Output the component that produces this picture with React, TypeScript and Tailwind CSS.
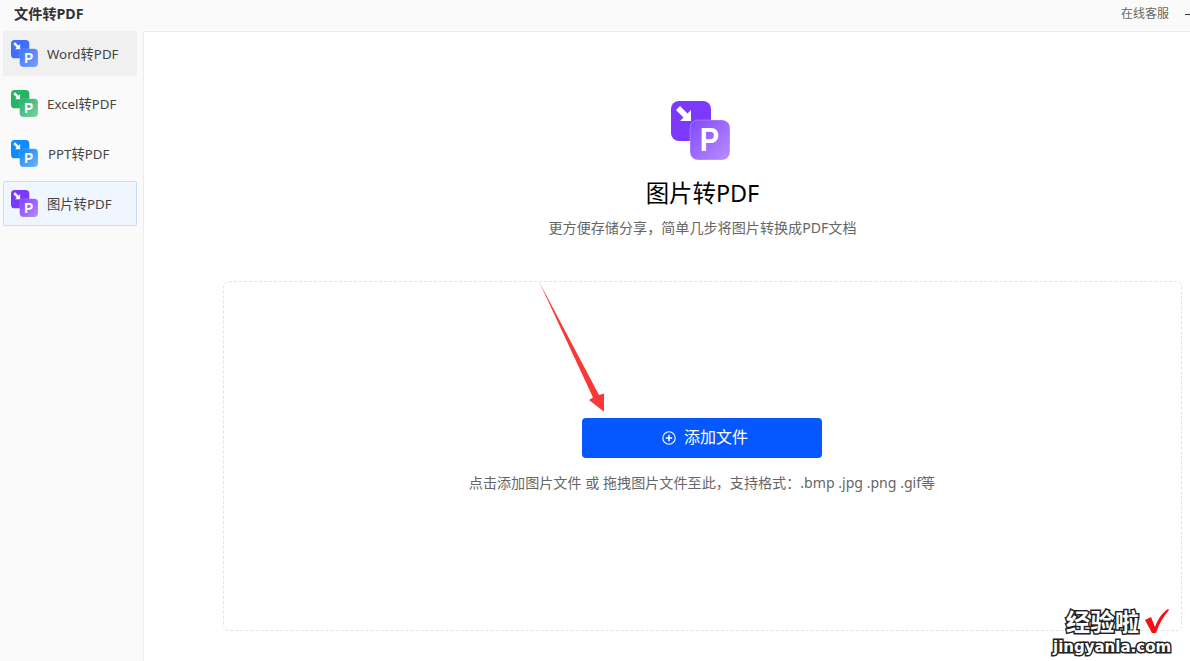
import React from "react";

const FONT = "font-['Noto_Sans','Noto_Sans_CJK_SC',sans-serif]";

function ConvertIcon({ id, back, from, to, size, ...rest }: { id: string; back: string; from: string; to: string; size: number; className?: string }) {
  return (
    <svg width={size} height={size} viewBox="0 0 59 59" {...rest}>
      <defs>
        <linearGradient id={id} x1="0" y1="0" x2="1" y2="1">
          <stop offset="0" stopColor={from} />
          <stop offset="1" stopColor={to} />
        </linearGradient>
      </defs>
      <rect x="0" y="0" width="40" height="40" rx="8" fill={back} />
      <path d="M5 9 L9 5 L16.5 12.5 L20 9 L20 20 L9 20 L12.5 16.5 Z" fill="#fff" />
      <rect x="19" y="19" width="40" height="40" rx="8" fill={`url(#${id})`} stroke="#ffffff" strokeOpacity="0.35" strokeWidth="0.8" />
      <text transform="translate(38.5 50) scale(0.85 1)" textAnchor="middle" fontSize="34" fontWeight="700" fill="#fff" fontFamily="'Liberation Sans',sans-serif">P</text>
    </svg>
  );
}

const items = [
  { id: "w", label: "Word转PDF", back: "#3e6ffb", from: "#3f75fb", to: "#7a9eff", cls: "bg-[#f0f0f0] border-transparent", text: "ml-[9px]" },
  { id: "e", label: "Excel转PDF", back: "#25b366", from: "#25ae68", to: "#7fd3a4", cls: "border-transparent", text: "ml-[9px]" },
  { id: "p", label: "PPT转PDF", back: "#0d8bfa", from: "#1185f5", to: "#6cb4ff", cls: "border-transparent", text: "ml-[10px]" },
  { id: "i", label: "图片转PDF", back: "#7c38fd", from: "#7e41fb", to: "#b48bfd", cls: "bg-[#f0f6ff] border-[#c3dcff]", text: "ml-[9px]" },
];

export default function App() {
  return (
    <div className={`${FONT} relative h-[661px] w-[1190px] overflow-hidden bg-white text-[#333]`}>
      <header className="flex h-[31px] items-center justify-between bg-[#fafafa] pb-[3px] pl-[14px]">
        <div className="text-[14.2px] font-bold text-[#333]">文件转PDF</div>
        <div className="flex items-center">
          <span className="text-[12px] text-[#666]">在线客服</span>
          <span className="ml-[16px] h-px w-[5px] bg-[#333]" />
        </div>
      </header>
      <div className="flex h-[630px]">
        <aside className="flex w-[144px] shrink-0 flex-col gap-[5px] border-r border-[#ececec] bg-[#fafafa] pl-[3px] pr-[6px]">
          {items.map((it) => (
            <div key={it.id} className={`flex h-[45px] items-center rounded-[2px] border pl-[7px] ${it.cls}`}>
              <ConvertIcon id={it.id} back={it.back} from={it.from} to={it.to} size={27} />
              <span className={`${it.text} pt-[2px] text-[13.3px] text-[#444]`}>{it.label}</span>
            </div>
          ))}
        </aside>
        <main className="flex min-w-0 flex-1 flex-col items-center border-t border-[#ececec] pl-[79px] pr-[8px] pt-[69px]">
          <ConvertIcon id="big" back="#7c38fd" from="#8247fb" to="#b98ffe" size={59} className="mr-[4px]" />
          <h1 className="mt-[13px] text-[23.4px] leading-[40px] text-black">图片转PDF</h1>
          <p className="mt-[5px] text-[14.1px] leading-[20px] text-[#666]">更方便存储分享，简单几步将图片转换成PDF文档</p>
          <section className="mt-[43px] flex h-[350px] w-full flex-col items-center rounded-[6px] border border-dashed border-[#e4e4e4] pt-[136px]">
            <button className="mr-[1px] flex h-[40px] w-[240px] items-center justify-center rounded-[4px] bg-[#0558ff] pb-[2px] pl-[6px] text-[16px] text-white">
              <svg width="14" height="14" viewBox="0 0 14 14" className="mr-[8px] mt-[2px]" fill="none" stroke="#fff">
                <circle cx="7" cy="7" r="6.2" strokeWidth="1.1" />
                <path d="M7 3.8V10.2M3.8 7H10.2" strokeWidth="1.5" />
              </svg>
              添加文件
            </button>
            <p className="mr-[1px] mt-[15px] text-[14.1px] leading-[20px] text-[#666]">点击添加图片文件 或 拖拽图片文件至此，支持格式：.bmp .jpg .png .gif等</p>
          </section>
        </main>
      </div>

      <svg className="absolute left-[530px] top-[275px]" width="90" height="145" viewBox="0 0 90 145">
        <path d="M9 6.5 L69 120 L74 118.5 L74 136.7 L59 125 L63 122.5 Z" fill="#fb3838" />
      </svg>

      <div className="absolute left-[1053px] top-[609px] w-[137px] select-none">
        <div className="flex items-center">
          <span className="ml-[13px] text-[24px] font-bold leading-[26px] tracking-[0.5px] text-white [-webkit-text-stroke:3px_#222] [paint-order:stroke_fill]">经验啦</span>
          <svg width="26" height="26" viewBox="0 0 26 26" className="ml-[4px] -mt-[2px]">
            <path d="M1 12 L7 9 L11 19 C14 11 18 5 24 1 L25 2 C19 9 15 16 12 25 L8 25 Z" fill="#f50f17" />
          </svg>
        </div>
        <div className="mt-[3px] font-['DejaVu_Sans',sans-serif] text-[15px] font-bold leading-[19px] text-white [-webkit-text-stroke:3px_#222] [paint-order:stroke_fill]">jingyanla.com</div>
      </div>
    </div>
  );
}
